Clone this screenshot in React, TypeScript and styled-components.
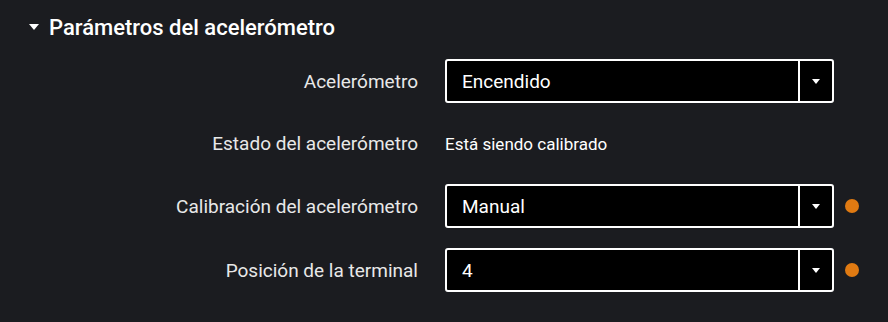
import { Fragment } from "react";
import styled, { createGlobalStyle } from "styled-components";

const GlobalStyle = createGlobalStyle`
  body {
    margin: 0;
    background: #1b1c20;
    font-family: Roboto, "Liberation Sans", sans-serif;
    color: #ececec;
  }
`;

const Wrapper = styled.div`
  width: 888px;
  height: 322px;
  background: #1b1c20;
  padding: 14px 0 0 0;
  box-sizing: border-box;
`;

const Header = styled.div`
  display: flex;
  align-items: center;
  gap: 10px;
  padding-left: 29px;
  height: 26px;
  font-size: 22px;
  font-weight: 500;
  color: #ffffff;
`;

const Caret = styled.span`
  width: 0;
  height: 0;
  border-left: 5.5px solid transparent;
  border-right: 5.5px solid transparent;
  border-top: 6px solid #ffffff;
`;

const Grid = styled.div`
  display: grid;
  grid-template-columns: 418px 389px auto;
  grid-template-rows: 44px 41px 44px 44px;
  column-gap: 27px;
  row-gap: 20px;
  margin-top: 19px;
  align-items: center;
`;

const Label = styled.div`
  text-align: right;
  font-size: 19px;
  color: #e8e8e8;
`;

const Value = styled.div`
  font-size: 17px;
  color: #ffffff;
`;

const Select = styled.div`
  height: 44px;
  box-sizing: border-box;
  border: 2px solid #ffffff;
  border-radius: 3px;
  background: #000000;
  display: flex;
  align-items: stretch;
`;

const SelectText = styled.div`
  flex: 1;
  display: flex;
  align-items: center;
  padding-left: 15px;
  font-size: 19px;
  color: #ffffff;
`;

const SelectButton = styled.div`
  width: 32px;
  border-left: 2px solid #ffffff;
  display: flex;
  align-items: center;
  justify-content: center;
`;

const SmallCaret = styled.span`
  width: 0;
  height: 0;
  margin-top: 1px;
  border-left: 4px solid transparent;
  border-right: 4px solid transparent;
  border-top: 5px solid #ffffff;
`;

const Dot = styled.span`
  width: 14px;
  height: 14px;
  border-radius: 50%;
  background: #e07a12;
  margin-left: -16px;
`;

type Row = {
  label: string;
  value: string;
  kind: "select" | "text";
  dot?: boolean;
};

const rows: Row[] = [
  { label: "Acelerómetro", value: "Encendido", kind: "select" },
  { label: "Estado del acelerómetro", value: "Está siendo calibrado", kind: "text" },
  { label: "Calibración del acelerómetro", value: "Manual", kind: "select", dot: true },
  { label: "Posición de la terminal", value: "4", kind: "select", dot: true },
];

export default function App() {
  return (
    <Wrapper>
      <GlobalStyle />
      <Header>
        <Caret />
        Parámetros del acelerómetro
      </Header>
      <Grid>
        {rows.map((r) => (
          <Fragment key={r.label}>
            <Label>{r.label}</Label>
            {r.kind === "select" ? (
              <Select>
                <SelectText>{r.value}</SelectText>
                <SelectButton>
                  <SmallCaret />
                </SelectButton>
              </Select>
            ) : (
              <Value>{r.value}</Value>
            )}
            {r.dot ? <Dot /> : <span />}
          </Fragment>
        ))}
      </Grid>
    </Wrapper>
  );
}
